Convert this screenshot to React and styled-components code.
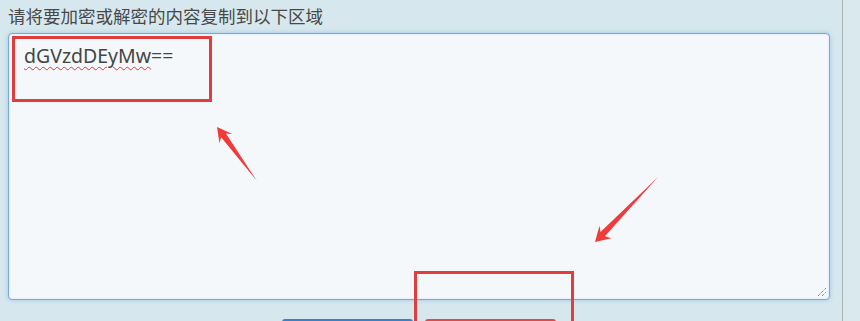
import React from 'react';
import styled, { createGlobalStyle } from 'styled-components';

const GlobalStyle = createGlobalStyle`
  html, body {
    margin: 0;
    padding: 0;
    background: #d6e8ed;
    overflow: hidden;
  }
  body {
    font-family: "Noto Sans", "Noto Sans CJK SC", sans-serif;
  }
`;

function App() {
  return (
    <Page>
      <GlobalStyle />
      <MainColumn>
        <Label>请将要加密或解密的内容复制到以下区域</Label>
        <InputBox>
          <Misspelled>dGVzdDEyMw</Misspelled>==
          <Grip viewBox="0 0 10 10">
            <line x1="1" y1="9" x2="9" y2="1" />
            <line x1="5" y1="9" x2="9" y2="5" />
          </Grip>
        </InputBox>
        <ButtonRow>
          <ActionButton $color="#3b80c9" aria-label="加密" />
          <ActionButton $color="#e24a4a" aria-label="解密" />
        </ButtonRow>
      </MainColumn>
      <SideStrip />

      <Annotations>
        <RedBox $x={12} $y={36} $w={200} $h={66} />
        <RedBox $x={414} $y={271} $w={160} $h={90} />
        <ArrowLayer viewBox="0 0 860 321">
          <polygon points="217,127 232.3,133.9 225.9,133.6 257,181 221.1,137.2 219.5,143.3" />
          <polygon points="595,242 611.4,238.3 604.9,236.2 658,177 600.5,232 599.5,225.8" />
        </ArrowLayer>
      </Annotations>
    </Page>
  );
}

export default App;

const Page = styled.div`
  position: relative;
  display: flex;
  width: 860px;
  height: 321px;
  overflow: hidden;
`;

const MainColumn = styled.div`
  width: 843px;
  box-sizing: border-box;
  border-right: 1px solid #a9b3b7;
  padding: 4px 12px 0 8px;
  display: flex;
  flex-direction: column;
  & > * {
    flex-shrink: 0;
  }
`;

const SideStrip = styled.div`
  flex: 1;
  background: #dae9ee;
`;

const Label = styled.div`
  font-family: "Noto Sans CJK SC", sans-serif;
  font-size: 17.5px;
  line-height: 24px;
  color: #484848;
  margin-bottom: 5px;
`;

const InputBox = styled.div`
  position: relative;
  box-sizing: border-box;
  width: 822px;
  height: 267px;
  background: #f4f8fb;
  border: 1px solid #76aadb;
  border-radius: 4px;
  box-shadow: 0 0 4px rgba(110, 165, 225, 0.55), inset 0 0 2px rgba(110, 165, 225, 0.3);
  padding: 9px 15px;
  font-family: "Noto Sans", sans-serif;
  font-size: 19.5px;
  line-height: 26px;
  color: #454545;
`;

const Misspelled = styled.span`
  text-decoration: underline wavy #d83a3a;
  text-decoration-thickness: 1px;
  text-underline-offset: 3px;
`;

const Grip = styled.svg`
  position: absolute;
  right: 2px;
  bottom: 2px;
  width: 10px;
  height: 10px;
  stroke: #555;
  stroke-width: 1;
  stroke-dasharray: 1 1;
`;

const ButtonRow = styled.div`
  display: flex;
  justify-content: center;
  gap: 12px;
  margin-top: 19px;
`;

const ActionButton = styled.div`
  width: 131px;
  height: 34px;
  border-radius: 3px;
  background: ${(p) => p.$color};
`;

const Annotations = styled.div`
  position: absolute;
  inset: 0;
  pointer-events: none;
`;

const RedBox = styled.div`
  position: absolute;
  left: ${(p) => p.$x}px;
  top: ${(p) => p.$y}px;
  width: ${(p) => p.$w}px;
  height: ${(p) => p.$h}px;
  box-sizing: border-box;
  border: 3px solid #e23d3d;
`;

const ArrowLayer = styled.svg`
  position: absolute;
  left: 0;
  top: 0;
  width: 860px;
  height: 321px;
  fill: #f23a3a;
`;
